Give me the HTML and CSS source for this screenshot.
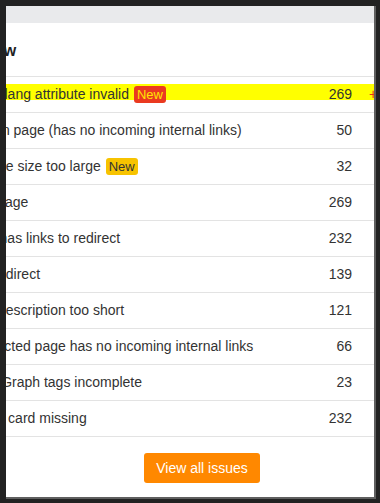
FILE: index.html
```html
<!DOCTYPE html>
<html lang="en">
<head>
	<meta charset="UTF-8">
	<title>Issues</title>
	<link rel="stylesheet" href="styles.css">
</head>
<body>
<div class="frame">
	<div class="topbar"></div>
	<div class="panel">
		<div class="head">
			<h2>Overview</h2>
		</div>
		<ul class="list">
			<li class="row hl">
				<div class="line">
					<span class="name">HTML lang attribute invalid <b class="tag tag-new">New</b></span>
					<span class="num">269</span>
					<span class="delta">+269</span>
				</div>
			</li>
			<li class="row"><div class="line"><span class="name">Orphan page (has no incoming internal links)</span><span class="num">50</span><span class="delta"></span></div></li>
			<li class="row"><div class="line"><span class="name">CSS file size too large <b class="tag tag-warn">New</b></span><span class="num">32</span><span class="delta"></span></div></li>
			<li class="row"><div class="line"><span class="name">Slow page</span><span class="num">269</span><span class="delta"></span></div></li>
			<li class="row"><div class="line"><span class="name">Page has links to redirect</span><span class="num">232</span><span class="delta"></span></div></li>
			<li class="row"><div class="line"><span class="name">3XX redirect</span><span class="num">139</span><span class="delta"></span></div></li>
			<li class="row"><div class="line"><span class="name">Meta description too short</span><span class="num">121</span><span class="delta"></span></div></li>
			<li class="row"><div class="line"><span class="name">Redirected page has no incoming internal links</span><span class="num">66</span><span class="delta"></span></div></li>
			<li class="row"><div class="line"><span class="name">Open Graph tags incomplete</span><span class="num">23</span><span class="delta"></span></div></li>
			<li class="row"><div class="line"><span class="name">Twitter card missing</span><span class="num">232</span><span class="delta"></span></div></li>
		</ul>
		<div class="foot">
			<button class="btn">View all issues</button>
		</div>
	</div>
</div>
</body>
</html>
```

FILE: styles.css
```css
body,h2,ul{
	margin: 0;
}
ul{
	padding: 0;
	list-style: none;
}
body{
	background-color: #222;
	padding: 6px 4px 4px 6px;
	font-family: "Liberation Sans", Arial, sans-serif;
	color: #333;
}
.frame{
	width: 368px;
	height: 491px;
	overflow: hidden;
	background-color: #fff;
	border-right: 2px solid #5f5f5f;
	border-bottom: 2px solid #5f5f5f;
}
.topbar{
	height: 17px;
	background-color: #e9eaec;
}
.panel{
	width: 478px;
	margin-left: -43px;
}
.head{
	padding: 18px 0 15px;
	border-bottom: 1px solid #e3e3e3;
}
.head h2{
	margin-left: -18px;
	font-size: 16px;
	line-height: 20px;
	font-weight: bold;
	color: #222;
}
.row{
	padding: 7px 0;
	border-bottom: 1px solid #e3e3e3;
	font-size: 14px;
	line-height: 21px;
}
.line{
	display: flex;
	white-space: nowrap;
}
.hl .line{
	background: linear-gradient(#ffff00 0, #ffff00 16px, transparent 16px);
}
.name{
	flex: 1;
}
.num{
	width: 60px;
	text-align: right;
}
.delta{
	width: 89px;
	padding-left: 17px;
	box-sizing: border-box;
	color: #e8341c;
}
.tag{
	display: inline-block;
	margin-left: 1px;
	padding: 0 3px;
	font-size: 13px;
	line-height: 17px;
	font-weight: normal;
	border-radius: 3px;
}
.tag-new{
	background-color: #ea3a20;
	color: #ffe600;
}
.tag-warn{
	background-color: #f7c300;
	color: #333;
}
.foot{
	padding: 16px 0 14px;
	text-align: center;
}
.btn{
	height: 30px;
	padding: 0 12px;
	border: 0;
	border-radius: 3px;
	background-color: #ff8800;
	color: #fff;
	font-family: "Liberation Sans", Arial, sans-serif;
	font-size: 14px;
	cursor: pointer;
}
```
